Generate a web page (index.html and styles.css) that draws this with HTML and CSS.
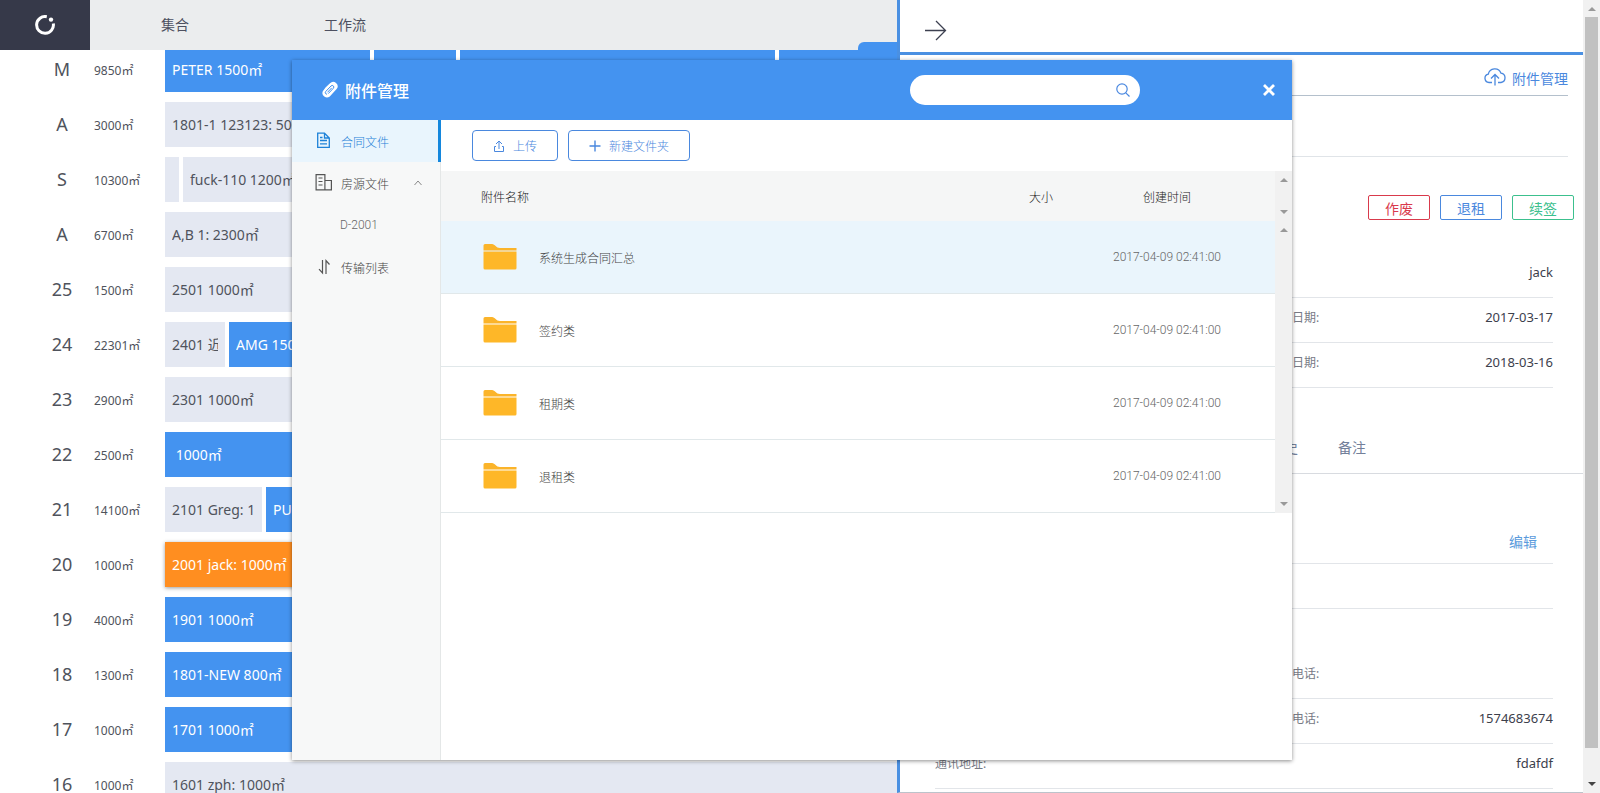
FILE: index.html
```
<!DOCTYPE html>
<html lang="zh-CN">
<head>
<meta charset="utf-8">
<title>附件管理</title>
<link rel="stylesheet" href="styles.css">
</head>
<body>
<div class="app">
  <div class="board">
    <header class="topbar">
      <a class="logo" href="#" aria-label="首页">
        <svg width="20" height="20" viewBox="0 0 20 20" fill="none" stroke="#fff" stroke-width="3"><path d="M11.8 1.7A8.4 8.4 0 1 0 18.3 8.4"/><circle cx="16" cy="4.6" r="2.2" fill="#fff" stroke="none"/></svg>
      </a>
      <nav class="nav"><a href="#">集合</a><a href="#">工作流</a></nav>
    </header>
    <span class="board-tab"></span>
    <main class="floors">
      <div class="floor"><b class="floor-no">M</b><span class="area">9850㎡</span><div class="units"><div class="unit rented" style="flex-grow:205"><span>PETER 1500㎡</span></div><div class="unit rented" style="flex-grow:82"></div><div class="unit rented" style="flex-grow:315"></div><div class="unit rented" style="flex-grow:118"></div></div></div>
      <div class="floor"><b class="floor-no">A</b><span class="area">3000㎡</span><div class="units"><div class="unit"><span>1801-1 123123: 500㎡</span></div></div></div>
      <div class="floor"><b class="floor-no">S</b><span class="area">10300㎡</span><div class="units"><div class="unit" style="flex-grow:14"></div><div class="unit" style="flex-grow:714"><span>fuck-110 1200㎡</span></div></div></div>
      <div class="floor"><b class="floor-no">A</b><span class="area">6700㎡</span><div class="units"><div class="unit"><span>A,B 1: 2300㎡</span></div></div></div>
      <div class="floor"><b class="floor-no">25</b><span class="area">1500㎡</span><div class="units"><div class="unit"><span>2501 1000㎡</span></div></div></div>
      <div class="floor"><b class="floor-no">24</b><span class="area">22301㎡</span><div class="units"><div class="unit" style="flex-grow:60"><span>2401 近</span></div><div class="unit rented" style="flex-grow:668"><span>AMG 1500㎡</span></div></div></div>
      <div class="floor"><b class="floor-no">23</b><span class="area">2900㎡</span><div class="units"><div class="unit"><span>2301 1000㎡</span></div></div></div>
      <div class="floor"><b class="floor-no">22</b><span class="area">2500㎡</span><div class="units"><div class="unit rented"><span>&nbsp;1000㎡</span></div></div></div>
      <div class="floor"><b class="floor-no">21</b><span class="area">14100㎡</span><div class="units"><div class="unit" style="flex-grow:97"><span>2101 Greg: 1</span></div><div class="unit rented" style="flex-grow:631"><span>PU</span></div></div></div>
      <div class="floor"><b class="floor-no">20</b><span class="area">1000㎡</span><div class="units"><div class="unit selected"><span>2001 jack: 1000㎡</span></div></div></div>
      <div class="floor"><b class="floor-no">19</b><span class="area">4000㎡</span><div class="units"><div class="unit rented"><span>1901 1000㎡</span></div></div></div>
      <div class="floor"><b class="floor-no">18</b><span class="area">1300㎡</span><div class="units"><div class="unit rented"><span>1801-NEW 800㎡</span></div></div></div>
      <div class="floor"><b class="floor-no">17</b><span class="area">1000㎡</span><div class="units"><div class="unit rented"><span>1701 1000㎡</span></div></div></div>
      <div class="floor"><b class="floor-no">16</b><span class="area">1000㎡</span><div class="units"><div class="unit"><span>1601 zph: 1000㎡</span></div></div></div>
    </main>
  </div>

  <aside class="panel">
    <header class="panel-head">
      <button class="plain" type="button" aria-label="收起"><svg width="22" height="22" viewBox="0 0 22 22" fill="none" stroke="#3d4050" stroke-width="1.3"><path d="M0 11.5H20.5M11 2L20.5 11.5L11 21"/></svg></button>
    </header>
    <div class="attach-row">
      <a href="#"><svg width="22" height="18" viewBox="0 0 22 18" fill="none" stroke="#4a88de" stroke-width="1.3"><path d="M8 14.5H5A4.2 4.2 0 0 1 4.3 6.2A6.6 6.6 0 0 1 17 5.2A4.7 4.7 0 0 1 17 14.5H14M11 17.5V6.5M7 10.5L11 6.5L15 10.5"/></svg>附件管理</a>
    </div>
    <div class="title-row"></div>
    <div class="actions">
      <button class="act red" type="button">作废</button><button class="act blue" type="button">退租</button><button class="act green" type="button">续签</button>
    </div>
    <dl class="fields">
      <div class="field wide"><dt></dt><dd>jack</dd></div>
      <div class="field"><dt></dt><dd></dd></div><div class="field"><dt>起租日期:</dt><dd>2017-03-17</dd></div>
      <div class="field"><dt></dt><dd></dd></div><div class="field"><dt>到期日期:</dt><dd>2018-03-16</dd></div>
    </dl>
    <nav class="tabs"><a href="#">历史</a><a href="#">备注</a></nav>
    <div class="edit-row"><a href="#">编辑</a></div>
    <dl class="fields contact">
      <div class="field wide"><dt></dt><dd></dd></div>
    </dl>
    <dl class="fields phones">
      <div class="field"><dt></dt><dd></dd></div><div class="field"><dt>公司电话:</dt><dd></dd></div>
      <div class="field"><dt></dt><dd></dd></div><div class="field"><dt>联系电话:</dt><dd>1574683674</dd></div>
      <div class="field wide"><dt>通讯地址:</dt><dd>fdafdf</dd></div>
    </dl>
  </aside>

  <div class="scrollbar page-scroll"><i class="up"></i><span class="thumb"></span><i class="down"></i></div>

  <div class="overlay">
    <section class="modal" role="dialog" aria-label="附件管理">
      <header class="modal-head">
        <svg width="16" height="18" viewBox="0 0 16 18"><path d="M3.5 6.5L8 2.2A4.4 4.4 0 0 1 14.6 8L7.8 15.4A4.5 4.5 0 0 1 .8 10.2Z" fill="#fff"/><path d="M4.6 13.2A1.6 1.6 0 0 1 3.8 10.4L9 5A1.6 1.6 0 0 1 11.4 7.2L6.6 12.3M5.8 11L9.4 7.2" fill="none" stroke="#4493f0" stroke-width="1" stroke-linecap="round"/></svg>
        <h1>附件管理</h1>
        <form class="search"><input type="text" aria-label="搜索"><button class="plain" type="button" aria-label="搜索"><svg width="14" height="14" viewBox="0 0 14 14" fill="none" stroke="#4a88e0" stroke-width="1.2"><circle cx="6" cy="6" r="5.2"/><path d="M9.8 9.8L13.5 13.5"/></svg></button></form>
        <button class="plain close" type="button" aria-label="关闭"><svg width="12" height="12" viewBox="0 0 12 12" stroke="#fff" stroke-width="2.8"><path d="M1 1L11 11M11 1L1 11"/></svg></button>
      </header>
      <div class="modal-body">
        <nav class="side">
          <a class="active" href="#"><svg width="18" height="18" viewBox="0 0 18 18" fill="none" stroke="#1e82d8" stroke-width="1.3"><path d="M2.7 1.2H9.5L14.3 6V15.3H2.7ZM9.5 1.2V6H14.3M5 5.5H7.5M5 8.5H12M5 11.8H12"/></svg>合同文件</a>
          <a href="#"><svg width="18" height="18" viewBox="0 0 18 18" fill="none" stroke="#555" stroke-width="1.2"><path d="M1.1 .6H9.9V15.9H1.1ZM9.9 6.5H16.4V15.9H9.9M3.5 4H7.5M3.5 7.5H7.5M3.5 11H7.5"/></svg>房源文件<svg class="chev" width="8" height="6" viewBox="0 0 8 6" fill="none" stroke="#888"><path d="M.5 5L4 1L7.5 5"/></svg></a>
          <a class="sub" href="#">D-2001</a>
          <a href="#"><svg width="18" height="18" viewBox="0 0 18 18" fill="none" stroke="#555" stroke-width="1.2"><path d="M7.5 2V15L4 11.2M11 16V2.5L14.5 6.5"/></svg>传输列表</a>
        </nav>
        <div class="files">
          <div class="toolbar">
            <button type="button"><svg width="12" height="12" viewBox="0 0 12 12" fill="none" stroke="#4a88de"><path d="M6 9V1M3 4L6 1L9 4M3 6.5H1.5V11.5H10.5V6.5H9"/></svg>上传</button>
            <button type="button"><svg width="12" height="12" viewBox="0 0 12 12" fill="none" stroke="#4a88de" stroke-width="1.4"><path d="M6 .5V11.5M.5 6H11.5"/></svg>新建文件夹</button>
          </div>
          <div class="list">
            <table>
              <thead><tr><th class="name">附件名称</th><th class="size">大小</th><th class="time">创建时间</th></tr></thead>
              <tbody>
                <tr class="hover"><td class="name"><div><svg class="folder" width="34" height="26" viewBox="0 0 34 26"><path d="M.5 1.5Q.5 0 2 0H9C12 0 13 4 17 4H33.5V6.5H.5Z" fill="#fbb42a"/><path d="M.5 7.5H33.5V24Q33.5 25.5 32 25.5H2Q.5 25.5.5 24Z" fill="#feb728"/></svg>系统生成合同汇总</div></td><td class="size"></td><td class="time">2017-04-09 02:41:00</td></tr>
                <tr><td class="name"><div><svg class="folder" width="34" height="26" viewBox="0 0 34 26"><path d="M.5 1.5Q.5 0 2 0H9C12 0 13 4 17 4H33.5V6.5H.5Z" fill="#fbb42a"/><path d="M.5 7.5H33.5V24Q33.5 25.5 32 25.5H2Q.5 25.5.5 24Z" fill="#feb728"/></svg>签约类</div></td><td class="size"></td><td class="time">2017-04-09 02:41:00</td></tr>
                <tr><td class="name"><div><svg class="folder" width="34" height="26" viewBox="0 0 34 26"><path d="M.5 1.5Q.5 0 2 0H9C12 0 13 4 17 4H33.5V6.5H.5Z" fill="#fbb42a"/><path d="M.5 7.5H33.5V24Q33.5 25.5 32 25.5H2Q.5 25.5.5 24Z" fill="#feb728"/></svg>租期类</div></td><td class="size"></td><td class="time">2017-04-09 02:41:00</td></tr>
                <tr><td class="name"><div><svg class="folder" width="34" height="26" viewBox="0 0 34 26"><path d="M.5 1.5Q.5 0 2 0H9C12 0 13 4 17 4H33.5V6.5H.5Z" fill="#fbb42a"/><path d="M.5 7.5H33.5V24Q33.5 25.5 32 25.5H2Q.5 25.5.5 24Z" fill="#feb728"/></svg>退租类</div></td><td class="size"></td><td class="time">2017-04-09 02:41:00</td></tr>
              </tbody>
            </table>
            <div class="bars"><div class="scrollbar head-scroll"><i class="up"></i><i class="down"></i></div><div class="scrollbar body-scroll"><i class="up"></i><i class="down"></i></div></div>
          </div>
        </div>
      </div>
    </section>
  </div>
</div>
</body>
</html>
```

FILE: styles.css
```
* { box-sizing: border-box; }
body {
  margin: 0;
  font: 14px "Noto Sans", "Noto Sans CJK SC", sans-serif;
  color: #4f535c;
  background: #fff;
}
a { color: inherit; text-decoration: none; }
h1, dl, dd { margin: 0; }
svg { display: block; flex: none; }
button { font: inherit; cursor: pointer; }
.plain { border: 0; padding: 0; background: none; }

.app {
  position: relative;
  display: grid;
  grid-template-columns: minmax(0, 1fr) 686px 17px;
  height: 100vh;
  overflow: hidden;
}

/* Floor board */
.board { position: relative; overflow: hidden; }
.topbar { position: relative; z-index: 1; display: flex; height: 50px; background: #ebedee; }
.logo { display: flex; width: 90px; align-items: center; justify-content: center; background: #363949; }
.nav { display: flex; }
.nav a { width: 170px; line-height: 50px; text-align: center; color: #4d5060; }
.board-tab {
  position: absolute; z-index: 2; top: 42px; right: 0;
  width: 39px; height: 30px;
  border-radius: 6px 0 0 0; background: #4493f0;
}
.floors { display: flex; flex-direction: column; gap: 10px; margin-top: -3px; }
.floor { display: flex; flex: none; height: 45px; line-height: 45px; padding-left: 40px; }
.floor-no { width: 44px; text-align: center; font-size: 18px; font-weight: 400; }
.area { width: 81px; padding-left: 10px; font-size: 12px; line-height: 47px; }
.units { display: flex; flex: 1; gap: 4px; min-width: 0; }
.unit { flex: 1 1 0; min-width: 0; background: #e4e8f2; white-space: nowrap; }
.unit span { display: block; margin: 0 7px; overflow: hidden; }
.rented { background: #4493f0; color: #fff; }
.selected { background: #ff8e20; color: #fff; box-shadow: 0 1px 4px rgba(0, 0, 0, .4); }

/* Detail panel */
.panel {
  position: relative;
  border-left: 3px solid #4a90e2;
  border-bottom: 1px solid #bcc3cb;
  background: #fff;
  overflow: hidden;
}
.panel-head { display: flex; align-items: center; height: 55px; padding: 8px 25px 0; border-bottom: 3px solid #4a90e2; }
.attach-row { display: flex; justify-content: flex-end; height: 41px; margin: 0 15px 0 35px; border-bottom: 1px solid #b4c0cc; line-height: 48px; color: #4a88de; }
.attach-row a { display: flex; gap: 6px; }
.attach-row svg { margin-top: 13px; }
.title-row { height: 61px; margin: 0 15px 0 35px; border-bottom: 1px solid #e0e4e8; }
.actions { display: flex; justify-content: flex-end; gap: 10px; padding: 38px 9px 0; }
.act { width: 62px; height: 25px; padding: 2px 0 0; line-height: 20px; border: 1px solid; border-radius: 2px; background: #fff; }
.red { color: #d93a4c; }
.blue { color: #4a88de; }
.green { color: #3cc08e; }
.fields { display: grid; grid-template-columns: 1fr 1fr; column-gap: 48px; margin: 33px 30px 0 35px; }
.field { display: flex; justify-content: space-between; height: 45px; border-bottom: 1px solid #e2e5e9; line-height: 38px; }
.wide { grid-column: 1 / -1; }
.field dt { padding-top: 1px; font-size: 12px; color: #777a85; }
.field dd { font-size: 13px; color: #3c404c; }
.tabs { display: flex; gap: 40px; height: 86px; padding: 35px 0 0 370px; border-bottom: 1px solid #d8dbe0; line-height: 50px; color: #73809a; }
.edit-row { display: flex; justify-content: flex-end; height: 90px; margin: 0 30px 0 35px; padding: 43px 16px 0; border-bottom: 1px solid #e2e5e9; line-height: 50px; color: #5b9bdc; }
.contact { margin-top: 0; }
.phones { margin-top: 45px; }

/* Scrollbars */
.scrollbar { display: flex; flex-direction: column; align-items: center; justify-content: space-between; padding: 7px 0; background: #f1f1f1; }
.up, .down { width: 0; height: 0; border: 4px solid transparent; }
.up { border-top: 0; border-bottom-color: #999; }
.down { border-bottom: 0; border-top-color: #999; }
.page-scroll { justify-content: flex-start; gap: 6px; }
.thumb { flex: 1; width: 13px; margin-bottom: 28px; background: #c1c1c1; }
.page-scroll .down { border-top-color: #444; }

/* Attachment dialog */
.overlay { position: absolute; inset: 0 16px 0 0; display: flex; justify-content: center; align-items: flex-start; padding-top: 60px; z-index: 3; }
.modal { display: flex; flex-direction: column; width: 1000px; max-width: 100%; min-height: 700px; background: #fff; box-shadow: 0 1px 4px rgba(0, 0, 0, .45); }
.modal-head { display: flex; align-items: center; height: 60px; padding: 0 17px 0 30px; background: #4493f0; color: #fff; }
.modal-head h1 { margin-left: 7px; font-size: 16px; font-weight: 500; }
.search { display: flex; align-items: center; width: 230px; height: 30px; margin-left: auto; padding: 0 10px 0 14px; border-radius: 15px; background: #fff; }
.search input { flex: 1; min-width: 0; border: 0; outline: 0; background: none; font: inherit; font-size: 12px; }
.close { margin-left: 123px; }
.modal-body { display: flex; flex: 1; font-family: Roboto, "Noto Sans CJK SC", sans-serif; font-size: 12px; font-weight: 300; color: #444; }
.side { width: 149px; border-right: 1px solid #e4e7e7; background: #f7f8f8; }
.side a { display: flex; align-items: center; gap: 8px; height: 42px; padding: 0 18px 0 23px; }
.side .active { width: 149px; border-right: 3px solid #1487dd; background: #e9f5fd; color: #1e82d8; }
.side .sub { padding-left: 48px; color: #666; }
.chev { margin-left: auto; }
.files { flex: 1; min-width: 0; }
.toolbar { display: flex; gap: 10px; padding: 10px 31px; }
.toolbar button { display: flex; align-items: center; gap: 8px; height: 31px; padding: 0 20px; border: 1px solid #4a88de; border-radius: 4px; background: #fff; color: #4a88de; }
.list { display: flex; }
table { flex: 1; min-width: 0; border-spacing: 0; table-layout: fixed; }
th, td { height: 73px; padding: 0; text-align: center; font-weight: 300; border-bottom: 1px solid #e1e8ea; }
th { height: 50px; border: 0; background: #f5f6f6; color: #222; }
.name { padding-left: 40px; text-align: left; }
.name div { display: flex; align-items: center; gap: 22px; }
.folder { margin-left: 2px; }
.size { width: 100px; }
.time { width: 184px; padding-right: 32px; }
td.time { color: #666; }
.hover td { background: #eaf5fc; }
.bars { display: flex; flex-direction: column; width: 17px; }
.head-scroll { height: 50px; }
.body-scroll { flex: 1; }
```
